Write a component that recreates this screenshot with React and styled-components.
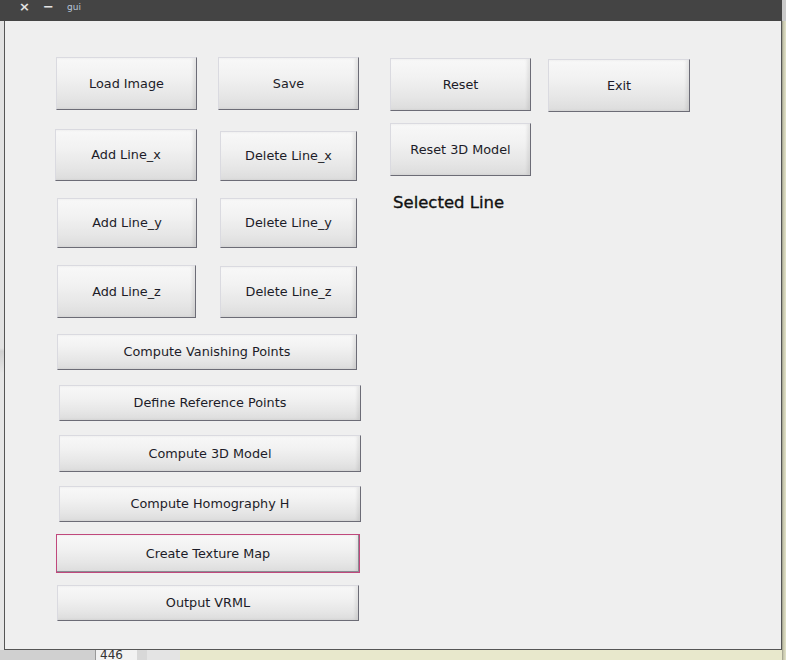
import React from "react";
import styled, { createGlobalStyle } from "styled-components";

const Global = createGlobalStyle`
  html, body { margin: 0; padding: 0; background: #d6d6d6; }
  body { font-family: "DejaVu Sans", Verdana, sans-serif; }
`;

const Screen = styled.div`
  width: 786px;
  height: 660px;
  display: flex;
  overflow: hidden;
  background: #d6d6d6;
`;

const Main = styled.div`
  width: 782px;
  display: flex;
  flex-direction: column;
`;

const RightShadow = styled.div`
  flex: 1;
  background: linear-gradient(to right, #9a9a88, #c9c9b0 40%, #e2e2c8);
  border-top: 21px solid #cacaca;
`;

const TitleBar = styled.div`
  height: 21px;
  background: #444444;
  display: flex;
  align-items: flex-start;
  padding-left: 19px;
  color: #dddddd;
  box-sizing: border-box;
`;

const TitleIcon = styled.span`
  font-family: "DejaVu Sans", sans-serif;
  font-weight: bold;
  font-size: ${(p) => p.$size}px;
  line-height: 14px;
  width: ${(p) => p.$w}px;
  margin-left: ${(p) => p.$ml || 0}px;
  text-align: center;
  color: #e4e4e4;
`;

const TitleText = styled.span`
  font-family: "DejaVu Sans", sans-serif;
  font-size: 9px;
  line-height: 14px;
  margin-left: 14px;
  color: #b8c4d8;
`;

const Middle = styled.div`
  height: 632px;
  display: flex;
`;

const LeftStrip = styled.div`
  width: 4px;
  background: linear-gradient(to bottom, #e2e2e2 0%, #e2e2e2 52%, #d0d0d0 52.5%, #e6e6e6 56%, #e6e6e6 100%);
`;

const Body = styled.div`
  flex: 1;
  background: #efefef;
  border-left: 1px solid #555;
  border-right: 1px solid #555;
  border-bottom: 1px solid #555;
  display: flex;
  box-sizing: border-box;
`;

const LeftPanel = styled.div`
  box-sizing: border-box;
  width: 360px;
  padding-left: 50px;
  display: flex;
  flex-direction: column;
`;

const RightPanel = styled.div`
  padding-left: 25px;
  display: flex;
  flex-direction: column;
`;

const Row = styled.div`
  display: flex;
  align-items: flex-start;
  margin-top: ${(p) => p.$mt}px;
`;

const Button = styled.button`
  box-sizing: border-box;
  width: ${(p) => p.$w}px;
  height: ${(p) => p.$h}px;
  margin-left: ${(p) => p.$ml || 0}px;
  margin-top: ${(p) => p.$dy || 0}px;
  padding: 0;
  font-family: "DejaVu Sans", Verdana, sans-serif;
  font-size: 12.8px;
  color: #1c1c28;
  background: linear-gradient(to bottom, #f8f8f8 0%, #f2f2f2 35%, #e6e6e6 75%, #dcdcdc 100%);
  border-style: solid;
  border-width: 1px;
  border-color: ${(p) =>
    p.$focus ? "#c0487c" : "#dadae0 #6c6c76 #6c6c76 #dadae0"};
  box-shadow: ${(p) =>
    p.$focus
      ? "inset -1px -1px 0 #8a8a92, inset -3px 0 3px rgba(0,0,0,0.08)"
      : "inset -3px 0 3px rgba(0,0,0,0.07)"};
  display: flex;
  align-items: center;
  justify-content: center;
  cursor: default;
`;

const Label = styled.div`
  margin-top: 17px;
  margin-left: 3px;
  font-family: "DejaVu Sans", Verdana, sans-serif;
  font-size: 16.5px;
  line-height: 20px;
  color: #111;
  -webkit-text-stroke: 0.35px #111;
`;

const BottomStrip = styled.div`
  flex: 1;
  display: flex;
  background: #d2d2d2;
`;

const Cell = styled.div`
  width: ${(p) => p.$w}px;
  background: ${(p) => p.$bg};
  border-left: ${(p) => (p.$line ? "1px solid #999" : "none")};
  font-family: "DejaVu Sans", sans-serif;
  font-size: 12px;
  line-height: 10px;
  color: #333;
  overflow: hidden;
  padding-left: ${(p) => p.$pl || 0}px;
  box-sizing: border-box;
`;

export default function App() {
  return (
    <>
      <Global />
      <Screen>
        <Main>
          <TitleBar>
            <TitleIcon $size={13} $w={10}>×</TitleIcon>
            <TitleIcon $size={13} $w={10} $ml={14}>−</TitleIcon>
            <TitleText>gui</TitleText>
          </TitleBar>
          <Middle>
            <LeftStrip />
            <Body>
              <LeftPanel>
                <Row $mt={36}>
                  <Button $w={141} $h={53} $ml={1}>Load Image</Button>
                  <Button $w={141} $h={53} $ml={21}>Save</Button>
                </Row>
                <Row $mt={19}>
                  <Button $w={142} $h={52}>Add Line_x</Button>
                  <Button $w={137} $h={50} $ml={23} $dy={2}>Delete Line_x</Button>
                </Row>
                <Row $mt={17}>
                  <Button $w={140} $h={50} $ml={2}>Add Line_y</Button>
                  <Button $w={137} $h={50} $ml={23}>Delete Line_y</Button>
                </Row>
                <Row $mt={17}>
                  <Button $w={139} $h={53} $ml={2}>Add Line_z</Button>
                  <Button $w={137} $h={52} $ml={24} $dy={1}>Delete Line_z</Button>
                </Row>
                <Row $mt={16}>
                  <Button $w={300} $h={36} $ml={2}>Compute Vanishing Points</Button>
                </Row>
                <Row $mt={15}>
                  <Button $w={302} $h={36} $ml={4}>Define Reference Points</Button>
                </Row>
                <Row $mt={14}>
                  <Button $w={302} $h={37} $ml={4}>Compute 3D Model</Button>
                </Row>
                <Row $mt={14}>
                  <Button $w={302} $h={36} $ml={4}>Compute Homography H</Button>
                </Row>
                <Row $mt={12}>
                  <Button $w={304} $h={39} $ml={1} $focus>Create Texture Map</Button>
                </Row>
                <Row $mt={12}>
                  <Button $w={302} $h={36} $ml={2}>Output VRML</Button>
                </Row>
              </LeftPanel>
              <RightPanel>
                <Row $mt={37}>
                  <Button $w={141} $h={53}>Reset</Button>
                  <Button $w={142} $h={53} $ml={17} $dy={1}>Exit</Button>
                </Row>
                <Row $mt={11}>
                  <Button $w={141} $h={53}>Reset 3D Model</Button>
                </Row>
                <Label>Selected Line</Label>
              </RightPanel>
            </Body>
          </Middle>
          <BottomStrip>
            <Cell $w={95} $bg="#d0d0d0" />
            <Cell $w={42} $bg="#f2f2f2" $line $pl={4}>446</Cell>
            <Cell $w={10} $bg="#d8d8d8" />
            <Cell $w={33} $bg="#e4e4e4" />
            <Cell $w={602} $bg="#e8e8cc" />
          </BottomStrip>
        </Main>
        <RightShadow />
      </Screen>
    </>
  );
}
